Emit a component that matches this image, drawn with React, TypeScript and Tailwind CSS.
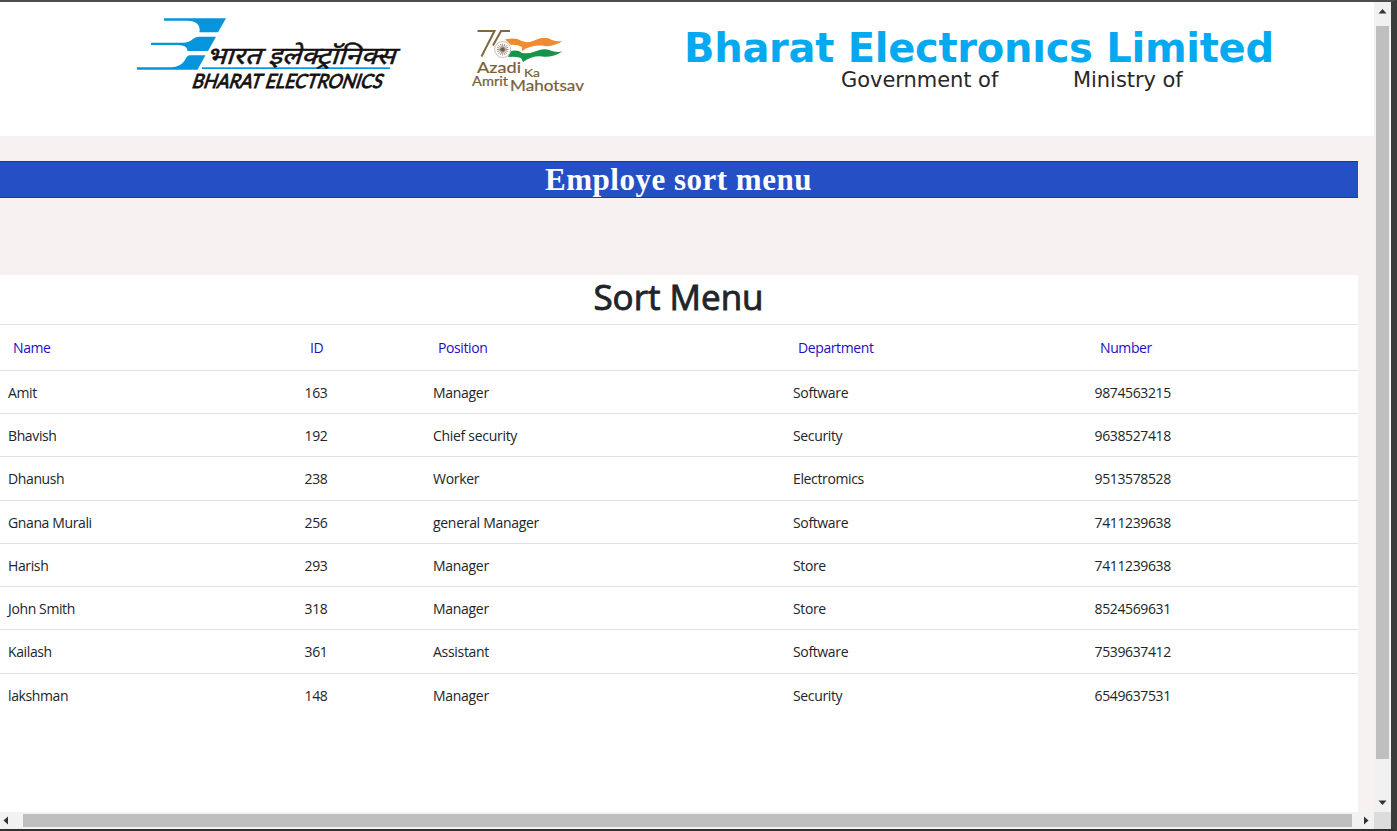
import React from "react";

type Row = { name: string; id: string; position: string; department: string; number: string };

const rows: Row[] = [
  { name: "Amit", id: "163", position: "Manager", department: "Software", number: "9874563215" },
  { name: "Bhavish", id: "192", position: "Chief security", department: "Security", number: "9638527418" },
  { name: "Dhanush", id: "238", position: "Worker", department: "Electromics", number: "9513578528" },
  { name: "Gnana Murali", id: "256", position: "general Manager", department: "Software", number: "7411239638" },
  { name: "Harish", id: "293", position: "Manager", department: "Store", number: "7411239638" },
  { name: "John Smith", id: "318", position: "Manager", department: "Store", number: "8524569631" },
  { name: "Kailash", id: "361", position: "Assistant", department: "Software", number: "7539637412" },
  { name: "lakshman", id: "148", position: "Manager", department: "Security", number: "6549637531" },
];

const columns = "grid grid-cols-[297px_128px_360px_302px_271px]";

function BelLogo() {
  return (
    <svg width="280" height="90" viewBox="0 0 280 90" className="shrink-0">
      <g fill="#0694dc">
        <path d="M34 10.200H96L88 24.300H69.500Q71 12.700 57 12.700H34Z" />
        <path d="M21 34.800H53Q59 34.600 63 31Q65.500 28.800 69 28.800H86L78 43H57.500Q57.500 37 48 37H21Z" />
        <path d="M7 59.200H41Q51 59 55 52Q57 47.300 60 47.300H75.500L67.500 61.700H7Z" />
        <rect x="72" y="59.300" width="188" height="1.700" />
      </g>
      <g fill="#151112" stroke="#151112">
        <text x="0" y="0" transform="translate(76 56.300) skewX(-18)" fontFamily="'Noto Sans Devanagari', 'Noto Sans', sans-serif" fontSize="24" strokeWidth="0.500" textLength="189" lengthAdjust="spacingAndGlyphs">
          भारत इलेक्ट्रॉनिक्स
        </text>
        <text x="0" y="0" transform="translate(61 79.500) skewX(-18)" fontFamily="Lato, sans-serif" fontSize="19.500" strokeWidth="0.900" textLength="190" lengthAdjust="spacingAndGlyphs">
          BHARAT ELECTRONICS
        </text>
      </g>
    </svg>
  );
}

function AzadiLogo() {
  const spokes = Array.from({ length: 16 }, (_, i) => (i * Math.PI) / 8);
  return (
    <svg width="140" height="80" viewBox="0 0 140 80" className="shrink-0">
      <g fill="none" stroke="#80683c" strokeWidth="2">
        <path d="M17.500 11H34.500L21.500 36.500" />
        <path d="M50 11H41L33 25.500" />
      </g>
      <path d="M45 19.500Q55 17 62 21Q68 24 78 19Q86 16 92 20Q98 22 102.500 21Q92 28 82 25.500Q70 25 62 31V27Q56 24 51 25Z" fill="#f28a30" />
      <path d="M50 31.500Q57 29 62 33Q70 34 78 30.500Q86 28 92 31Q98 32.500 102.500 31.500Q92 38 82 36.500Q72 35.500 63 42L61 38Q55 36 48 37Z" fill="#169447" />
      <circle cx="42.700" cy="29.500" r="8" fill="#fff" stroke="#c9c0b2" strokeWidth="1" />
      <g stroke="#8b7c66" strokeWidth=".8">
        {spokes.map((a) => (
          <path key={a} d={`M42.700 29.500L${42.7 + 6 * Math.cos(a)} ${29.5 + 6 * Math.sin(a)}`} />
        ))}
      </g>
      <circle cx="42.700" cy="29.500" r="2" fill="#6e5c46" />
      <g fill="#7a6035" stroke="#7a6035" strokeWidth=".2" fontFamily="Lato, sans-serif">
        <text x="17" y="53" fontSize="15" textLength="44" lengthAdjust="spacingAndGlyphs">Azadi</text>
        <text x="64" y="56.500" fontSize="12" textLength="16" lengthAdjust="spacingAndGlyphs">Ka</text>
        <text x="12" y="66" fontSize="12.500" textLength="36" lengthAdjust="spacingAndGlyphs">Amrit</text>
        <text x="50" y="70.500" fontSize="14.500" textLength="74" lengthAdjust="spacingAndGlyphs">Mahotsav</text>
      </g>
    </svg>
  );
}

function Header() {
  return (
    <header className="flex h-[134px] shrink-0 items-start bg-white pl-[130px] pt-[6px]">
      <BelLogo />
      <div className="ml-[50px] mt-3">
        <AzadiLogo />
      </div>
      <div className="ml-[84px] mt-[17px] flex flex-col whitespace-nowrap font-['DejaVu_Sans',sans-serif]">
        <h1 className="text-[40px] font-bold leading-[46px] tracking-[-0.280px] text-[#04a9ef]">Bharat Electronıcs Limited</h1>
        <div className="-mt-[3px] flex pl-[157px] text-[21px] leading-6 tracking-[-0.050px] text-[#2a2628]">
          <span className="w-[232px]">Government of</span>
          <span>Ministry of</span>
        </div>
      </div>
    </header>
  );
}

function SortTable() {
  return (
    <section className="w-[1358px] grow bg-white font-['Open_Sans',sans-serif] text-[14px] text-[#212529]">
      <h2 className="h-[49px] pr-px text-center text-[35px] font-medium leading-[44px] [-webkit-text-stroke:0.900px_#212529]">Sort Menu</h2>
      <div className={`${columns} h-[45.900px] items-center border-t border-[#e1e3e5] pl-[5px] tracking-[-0.400px] text-[#1c10c0]`}>
        <span className="pl-2">Name</span>
        <span className="pl-2">ID</span>
        <span className="pl-2">Position</span>
        <span className="pl-2">Department</span>
        <span className="pl-2">Number</span>
      </div>
      {rows.map((r) => (
        <div key={r.name} className={`${columns} h-[43.250px] items-center border-t border-[#dee2e6] pt-[0.600px]`}>
          <span className="pl-2 tracking-[-0.380px]">{r.name}</span>
          <span className="pl-[7.500px] tracking-[-0.350px]">{r.id}</span>
          <span className="pl-2 tracking-[-0.300px]">{r.position}</span>
          <span className="pl-2 tracking-[-0.360px]">{r.department}</span>
          <span className="pl-[7.500px] tracking-[-0.370px]">{r.number}</span>
        </div>
      ))}
    </section>
  );
}

function Arrow({ d }: { d: string }) {
  return (
    <svg width="9" height="9" viewBox="0 0 9 9" className="shrink-0">
      <path d={d} fill="#333" />
    </svg>
  );
}

export default function App() {
  return (
    <div className="flex h-[831px] w-[1397px] flex-col overflow-hidden border-b-2 border-r-[6px] border-t-2 border-b-[#303232] border-r-[#3a3b3b] border-t-[#4d4d4d] bg-[#f7f1f1]">
      <div className="flex h-[810px]">
        <main className="flex w-[1374px] flex-col">
          <Header />
          <div className="mt-[25px] h-[37px] w-[1358px] shrink-0 border-y border-[#143aa5] bg-[#2550c5]">
            <h2 className="pr-px text-center font-['Liberation_Serif',serif] text-[31px] font-bold leading-[35px] tracking-[0.500px] text-white">Employe sort menu</h2>
          </div>
          <div className="h-[77px] shrink-0" />
          <SortTable />
        </main>
        <div className="flex w-[17px] flex-col items-center bg-[#f1f1f1]">
          <div className="flex h-6 items-start pt-1">
            <Arrow d="M0.500 7.500H8.500L4.500 3Z" />
          </div>
          <div className="h-[733px] w-[13px] bg-[#bfbfbf]" />
          <div className="mt-[39px]">
            <Arrow d="M0.500 2.500H8.500L4.500 7Z" />
          </div>
        </div>
      </div>
      <div className="flex h-[17px] items-center bg-[#f2f2f2]">
        <div className="flex w-[23px] pl-[2px]">
          <Arrow d="M1.500 4.500L6 0.500V8.500Z" />
        </div>
        <div className="h-[13px] w-[1329px] bg-[#bfbfbf]" />
        <div className="flex w-[22px] justify-center pl-1">
          <Arrow d="M7.500 4.500L3 0.500V8.500Z" />
        </div>
        <div className="h-[17px] w-[17px] bg-[#dcdcdc]" />
      </div>
    </div>
  );
}
